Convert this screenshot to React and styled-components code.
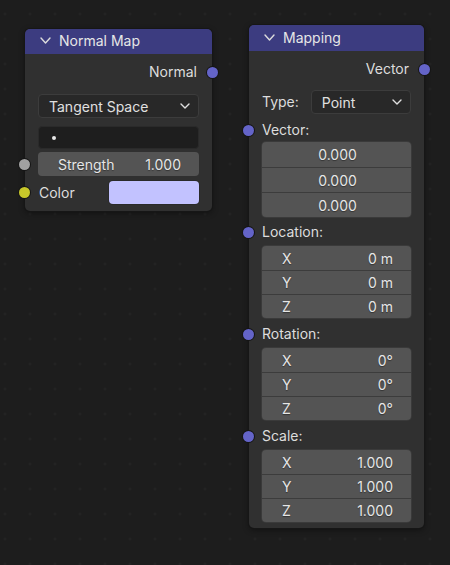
import React from "react";
import styled, { createGlobalStyle } from "styled-components";

const GlobalStyle = createGlobalStyle`
  html, body {
    margin: 0;
    padding: 0;
    background: #1d1d1d;
  }
  * {
    box-sizing: border-box;
  }
`;

const Canvas = styled.div`
  position: relative;
  width: 450px;
  height: 565px;
  overflow: hidden;
  background-color: #1d1d1d;
  background-image: radial-gradient(circle, #272727 0.8px, transparent 1.4px);
  background-size: 25px 25px;
  background-position: -7.5px 1.5px;
  font-family: Inter, "Noto Sans", "DejaVu Sans", sans-serif;
  font-size: 14px;
  color: #e0e0e0;
`;

// nodes sit at their own spot on the editor canvas
const Node = styled.div`
  position: absolute;
  left: ${(p) => p.x}px;
  top: ${(p) => p.y}px;
  width: ${(p) => p.w}px;
  background: #303030;
  border-radius: 5px;
  box-shadow: 0 0 0 1px #161616, 0 2px 6px rgba(0, 0, 0, 0.45);
  padding-bottom: ${(p) => p.pb || 6}px;
`;

const Header = styled.div`
  display: flex;
  align-items: center;
  height: ${(p) => p.h || 25}px;
  padding: 0 0 2px 15px;
  gap: 8px;
  background: #3c3c80;
  border-radius: 5px 5px 0 0;
  color: #e6e6e6;
`;

const Body = styled.div`
  display: flex;
  flex-direction: column;
  padding: 0 13px 0 13px;
`;

const Row = styled.div`
  position: relative;
  display: flex;
  align-items: center;
  height: ${(p) => p.h || 24}px;
  margin-top: ${(p) => p.mt || 0}px;
  justify-content: ${(p) => (p.right ? "flex-end" : "flex-start")};
  padding-right: ${(p) => (p.right ? 2 : 0)}px;
  gap: ${(p) => p.gap || 0}px;
  color: #dddddd;
`;

const Label = styled.span`
  margin-top: -1px;
`;

const Socket = styled.span`
  position: absolute;
  top: 50%;
  ${(p) => (p.side === "right" ? "right: -19px;" : "left: -19px;")}
  width: 11px;
  height: 11px;
  margin-top: -5.5px;
  border-radius: 50%;
  background: ${(p) => p.color};
  box-shadow: 0 0 0 1px #151515;
`;

const Dropdown = styled.div`
  display: flex;
  align-items: center;
  justify-content: space-between;
  flex: ${(p) => (p.grow ? 1 : "none")};
  width: ${(p) => (p.grow ? "auto" : "100%")};
  height: 24px;
  padding: 0 8px 0 10px;
  background: #282828;
  border: 1px solid #3c3c3c;
  border-radius: 4px;
  color: #e0e0e0;
`;

const TextField = styled.div`
  display: flex;
  align-items: center;
  height: 23px;
  padding-left: 13px;
  background: #1e1e1e;
  border: 1px solid #2a2a2a;
  border-radius: 4px;
`;

const Dot = styled.span`
  width: 4px;
  height: 4px;
  border-radius: 50%;
  background: #e8e8e8;
`;

const Slider = styled.div`
  display: flex;
  align-items: center;
  justify-content: space-between;
  width: 100%;
  height: 24px;
  padding: 0 18px 0 20px;
  background: #545454;
  border-radius: 4px;
  color: #e6e6e6;
  text-shadow: 0 1px 1px rgba(0, 0, 0, 0.4);
`;

const Swatch = styled.div`
  margin-left: auto;
  width: 90px;
  height: 23px;
  border-radius: 4px;
  background: ${(p) => p.color};
  box-shadow: 0 0 0 1px #2a2a2a;
`;

const FieldBox = styled.div`
  display: flex;
  flex-direction: column;
  margin-top: ${(p) => p.mt || 0}px;
  border-radius: 4px;
  overflow: hidden;
  background: #545454;
  box-shadow: 0 0 0 1px #3a3a3a;
`;

const Field = styled.div`
  display: flex;
  align-items: center;
  justify-content: ${(p) => (p.center ? "center" : "space-between")};
  height: ${(p) => p.h || 24}px;
  padding: 0 18px 0 20px;
  color: #e6e6e6;
  text-shadow: 0 1px 1px rgba(0, 0, 0, 0.4);
  & + & {
    border-top: 1px solid #3c3c3c;
  }
`;

const Chevron = ({ w = 9, h = 5, color = "#dcdcdc" }) => (
  <svg width={w + 2} height={h + 2} viewBox={`0 0 ${w + 2} ${h + 2}`} fill="none">
    <path
      d={`M1 1 L${1 + w / 2} ${1 + h} L${1 + w} 1`}
      stroke={color}
      strokeWidth="1.4"
      strokeLinecap="round"
      strokeLinejoin="round"
    />
  </svg>
);

const VIOLET = "#6464c8";

function VectorGroup({ label, rows, mt }) {
  return (
    <>
      <Row mt={mt}>
        <Socket color={VIOLET} />
        <Label>{label}</Label>
      </Row>
      <FieldBox mt={2}>
        {rows.map(([axis, value]) => (
          <Field key={axis}>
            <span>{axis}</span>
            <span>{value}</span>
          </Field>
        ))}
      </FieldBox>
    </>
  );
}

export default function App() {
  return (
    <>
      <GlobalStyle />
      <Canvas>
        <Node x={25} y={29} w={187} pb={7}>
          <Header h={25}>
            <Chevron />
            <span>Normal Map</span>
          </Header>
          <Body>
            <Row right mt={6}>
              <Label>Normal</Label>
              <Socket side="right" color={VIOLET} />
            </Row>
            <Row mt={10}>
              <Dropdown>
                <span>Tangent Space</span>
                <Chevron w={8} h={4} color="#e0e0e0" />
              </Dropdown>
            </Row>
            <Row h={23} mt={8} style={{ display: "block" }}>
              <TextField>
                <Dot />
              </TextField>
            </Row>
            <Row mt={3}>
              <Socket color="#a1a1a1" />
              <Slider>
                <span>Strength</span>
                <span>1.000</span>
              </Slider>
            </Row>
            <Row h={23} mt={5}>
              <Socket color="#c7c72a" />
              <Label style={{ marginLeft: 1 }}>Color</Label>
              <Swatch color="#c2c2ff" />
            </Row>
          </Body>
        </Node>

        <Node x={249} y={25} w={175} pb={6}>
          <Header h={26}>
            <Chevron />
            <span>Mapping</span>
          </Header>
          <Body>
            <Row right mt={6}>
              <Label>Vector</Label>
              <Socket side="right" color={VIOLET} />
            </Row>
            <Row mt={9} gap={12}>
              <Label>Type:</Label>
              <Dropdown grow>
                <span>Point</span>
                <Chevron w={8} h={4} color="#e0e0e0" />
              </Dropdown>
            </Row>
            <Row mt={4}>
              <Socket color={VIOLET} />
              <Label>Vector:</Label>
            </Row>
            <FieldBox>
              <Field center h={25}>0.000</Field>
              <Field center h={25}>0.000</Field>
              <Field center h={25}>0.000</Field>
            </FieldBox>
            <VectorGroup
              label="Location:"
              mt={3}
              rows={[["X", "0 m"], ["Y", "0 m"], ["Z", "0 m"]]}
            />
            <VectorGroup
              label="Rotation:"
              mt={4}
              rows={[["X", "0°"], ["Y", "0°"], ["Z", "0°"]]}
            />
            <VectorGroup
              label="Scale:"
              mt={4}
              rows={[["X", "1.000"], ["Y", "1.000"], ["Z", "1.000"]]}
            />
          </Body>
        </Node>
      </Canvas>
    </>
  );
}
